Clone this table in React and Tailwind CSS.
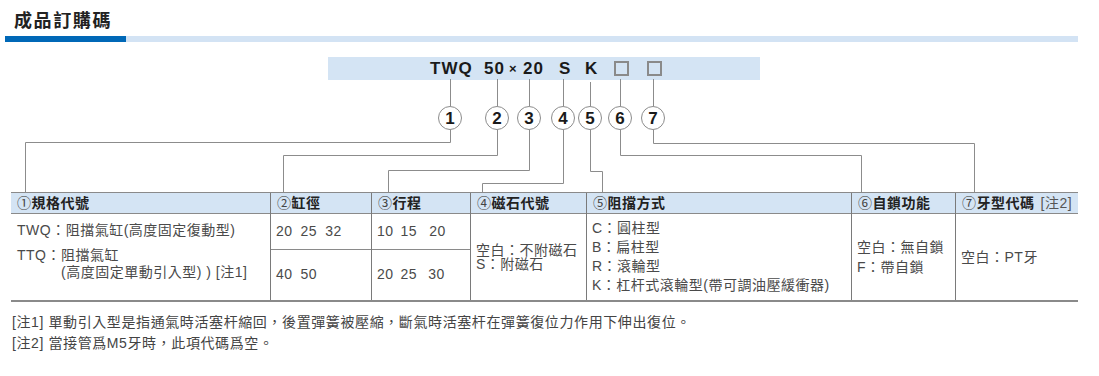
import React from 'react';

const LINES = [
  'M450.5 79V106M450.5 130V142.5H25.5V192',
  'M497.5 79V106M497.5 130V155.5H283.5V192',
  'M529.5 79V106M529.5 130V170.5H388.5V192',
  'M563.5 79V106M563.5 130V183.5H482.5V192',
  'M590.5 82V106M590.5 130V171.5H602.5V192',
  'M620.5 79V106M620.5 130V155.5H861.5V192',
  'M653.5 79V106M653.5 130V143.5H974.5V192',
];

const NODES = [
  { n: 1, pos: 'left-[438px]' },
  { n: 2, pos: 'left-[485px]' },
  { n: 3, pos: 'left-[517px]' },
  { n: 4, pos: 'left-[551px]' },
  { n: 5, pos: 'left-[578px]' },
  { n: 6, pos: 'left-[608px]' },
  { n: 7, pos: 'left-[641px]' },
];

const Head = ({ num, children, extra }) => (
  <div className="h-[21px] px-[6px] flex items-center bg-[#d4e4f4] border-b border-[#8a8a8a] text-[14px] tracking-[0.5px] text-[#222] whitespace-nowrap">
    <span className="font-normal text-[#444]">{num}</span>
    <span className="font-bold">{children}</span>
    {extra && <span className="font-normal text-[#555] ml-[6px]">{extra}</span>}
  </div>
);

const Nums = ({ items, gaps }) => (
  <div className="flex">
    {items.map((t, i) => (
      <span key={t + i} className={i === 0 ? '' : gaps[i - 1]}>{t}</span>
    ))}
  </div>
);

export default function App() {
  return (
    <div className="w-[1099px] h-[376px] bg-white overflow-hidden font-['Liberation_Sans','Noto_Sans_CJK_TC',sans-serif] text-[#4a4a4a]">
      {/* Title */}
      <h2 className="pl-[14px] pt-[11px] text-[18px] leading-[20px] font-bold tracking-[1.6px] text-[#222]">成品訂購碼</h2>
      <div className="mt-[5px] ml-[5px] flex h-[6px] w-[1073px]">
        <div className="w-[121px] bg-[#0068b7]" />
        <div className="flex-1 bg-[#d3e3f4]" />
      </div>

      {/* Code diagram */}
      <div className="relative h-[150px] pt-[15px]">
        <div className="ml-[328px] w-[432px] h-[23px] bg-[#d4e4f4] flex items-center pl-[102px] text-[17px] font-bold tracking-[1px] text-[#1a1a1a] leading-[23px]">
          <span className="w-[54px]">TWQ</span>
          <span className="w-[25px]">50</span>
          <span className="w-[14px] text-[13px]">×</span>
          <span className="w-[36px]">20</span>
          <span className="w-[26px]">S</span>
          <span className="w-[29px]">K</span>
          <span className="w-[33px] flex">
            <span className="w-[15px] h-[15px] border-2 border-[#8a8a8a]" />
          </span>
          <span className="w-[15px] h-[15px] border-2 border-[#8a8a8a]" />
        </div>
        <svg className="absolute left-0 top-0" width="1099" height="150" viewBox="0 42 1099 150" fill="none">
          {LINES.map((d) => (
            <path key={d} d={d} stroke="#8c8c8c" strokeWidth="1" />
          ))}
        </svg>
        {NODES.map((c) => (
          <div
            key={c.n}
            className={`absolute top-[64px] ${c.pos} w-[24px] h-[24px] rounded-full border border-[#8c8c8c] bg-white flex items-center justify-center text-[17px] font-bold text-[#1a1a1a] leading-none`}
          >
            {c.n}
          </div>
        ))}
      </div>

      {/* Table */}
      <div className="ml-[11px] w-[1067px] flex border-t border-b-2 border-[#8a8a8a] text-[14px] tracking-[0.5px]">
        <div className="w-[259px] flex flex-col">
          <Head num="①">規格代號</Head>
          <div className="h-[86px] pl-[6px] pt-[7px]">
            <div className="leading-[18px]">TWQ：阻擋氣缸(高度固定復動型)</div>
            <div className="mt-[8px] flex leading-[17px]">
              <span>TTQ：</span>
              <div>
                <div>阻擋氣缸</div>
                <div>(高度固定單動引入型) ) [注1]</div>
              </div>
            </div>
          </div>
        </div>

        <div className="w-[101px] flex flex-col border-l border-[#7a7a7a]">
          <Head num="②">缸徑</Head>
          <div className="h-[36px] px-[5px] flex items-center border-b border-[#8a8a8a]">
            <Nums items={['20', '25', '32']} gaps={['ml-[8px]', 'ml-[8px]']} />
          </div>
          <div className="h-[49px] px-[5px] flex items-center">
            <Nums items={['40', '50']} gaps={['ml-[8px]']} />
          </div>
        </div>

        <div className="w-[99px] flex flex-col border-l border-[#7a7a7a]">
          <Head num="③">行程</Head>
          <div className="h-[36px] px-[5px] flex items-center border-b border-[#8a8a8a]">
            <Nums items={['10', '15', '20']} gaps={['ml-[7px]', 'ml-[12px]']} />
          </div>
          <div className="h-[49px] px-[5px] flex items-center">
            <Nums items={['20', '25', '30']} gaps={['ml-[7px]', 'ml-[11px]']} />
          </div>
        </div>

        <div className="w-[116px] flex flex-col border-l border-[#7a7a7a]">
          <Head num="④">磁石代號</Head>
          <div className="h-[86px] px-[5px] flex flex-col justify-center leading-[14px] whitespace-nowrap">
            <div>空白：不附磁石</div>
            <div>S：附磁石</div>
          </div>
        </div>

        <div className="w-[265px] flex flex-col border-l border-[#7a7a7a]">
          <Head num="⑤">阻擋方式</Head>
          <div className="h-[86px] px-[5px] flex flex-col justify-center leading-[19px] whitespace-nowrap">
            <div>C：圓柱型</div>
            <div>B：扁柱型</div>
            <div>R：滾輪型</div>
            <div>K：杠杆式滾輪型(帶可調油壓緩衝器)</div>
          </div>
        </div>

        <div className="w-[104px] flex flex-col border-l border-[#7a7a7a]">
          <Head num="⑥">自鎖功能</Head>
          <div className="h-[86px] px-[5px] flex flex-col justify-center leading-[20px] whitespace-nowrap">
            <div>空白：無自鎖</div>
            <div>F：帶自鎖</div>
          </div>
        </div>

        <div className="w-[123px] flex flex-col border-l border-[#7a7a7a]">
          <Head num="⑦" extra="[注2]">牙型代碼</Head>
          <div className="h-[86px] px-[5px] flex items-center whitespace-nowrap">
            空白：PT牙
          </div>
        </div>
      </div>

      {/* Notes */}
      <div className="mt-[10px] pl-[12px] text-[14px] leading-[21px] tracking-[0.6px] text-[#444]">
        <p>[注1] 單動引入型是指通氣時活塞杆縮回，後置彈簧被壓縮，斷氣時活塞杆在彈簧復位力作用下伸出復位。</p>
        <p>[注2] 當接管爲M5牙時，此項代碼爲空。</p>
      </div>
    </div>
  );
}
